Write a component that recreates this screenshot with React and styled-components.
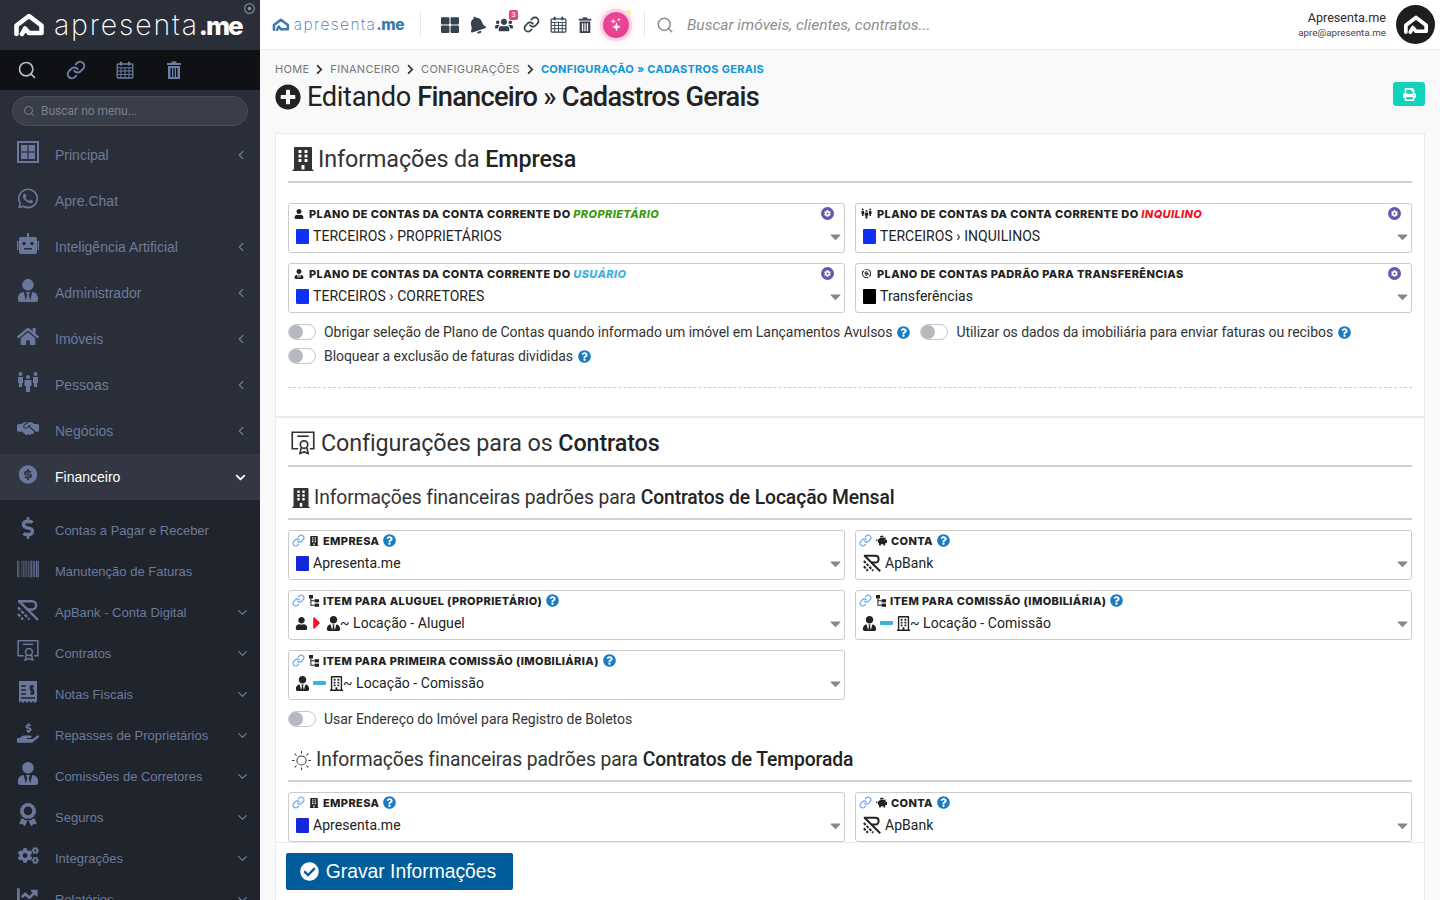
import React from "react";
import styled, { createGlobalStyle } from "styled-components";
import {
  FaWhatsapp, FaUserTie, FaHome, FaDollarSign, FaBarcode,
  FaHandHoldingUsd, FaAward, FaCogs, FaChartLine, FaThLarge,
  FaBell, FaUsers, FaPlusCircle, FaPrint, FaBuilding, FaRegBuilding, FaUser,
  FaQuestionCircle, FaCog, FaCheckCircle, FaCaretRight, FaCaretDown,
  FaPiggyBank, FaRegDotCircle, FaChevronRight,
} from "react-icons/fa";
import { FaHandshakeSimple } from "react-icons/fa6";
import { FiLink, FiSearch, FiChevronLeft, FiChevronDown } from "react-icons/fi";
import { PiSunLight } from "react-icons/pi";
import { RiMoneyDollarCircleFill, RiExchangeDollarLine } from "react-icons/ri";
import { BsStars } from "react-icons/bs";

const GlobalStyle = createGlobalStyle`
  html, body { margin: 0; height: 100%; overflow: hidden; }
  body { font-family: Roboto, "Liberation Sans", sans-serif; background: #f9f9f9; color: #222; }
  * { box-sizing: border-box; }
`;

// drawn icons
const LogoMark = ({ size = 32 }) => (
  <svg width={size} height={(size * 3) / 4} viewBox="0 0 32 24" fill="none" stroke="currentColor" strokeWidth="4.6" strokeLinejoin="round" strokeLinecap="round">
    <path d="M3.5 21 V12.5 L16 3 L28.5 12.5 V20 H16 L12 15.5 L9 21" />
  </svg>
);

const WindowIcon = ({ size = 22 }) => (
  <svg width={size} height={size} viewBox="0 0 22 22" fill="currentColor">
    <path fillRule="evenodd" d="M0 0H22V22H0ZM2 2V20H20V2Z" />
    <rect x="4" y="4" width="6.4" height="6.4" />
    <rect x="11.6" y="4" width="6.4" height="6.4" />
    <rect x="4" y="11.6" width="6.4" height="6.4" />
    <rect x="11.6" y="11.6" width="6.4" height="6.4" />
  </svg>
);

const CalendarIcon = ({ size = 18 }) => (
  <svg width={size} height={size} viewBox="0 0 18 18" fill="none" stroke="currentColor" strokeWidth="1.3">
    <rect x="1.2" y="3" width="15.6" height="14" rx="1" />
    <path d="M1.2 6.8H16.8M1.2 10H16.8M1.2 13.4H16.8M5 6.8V17M9 6.8V17M13 6.8V17" strokeWidth="1" />
    <path d="M5 .8V4.4M13 .8V4.4" strokeWidth="2" />
  </svg>
);

const TrashIcon = ({ size = 18 }) => (
  <svg width={size} height={size} viewBox="0 0 18 18" fill="currentColor">
    <rect x="2" y="2" width="14" height="2" />
    <rect x="6.5" y="0.4" width="5" height="2" />
    <path fillRule="evenodd" d="M3 5H15V18H3ZM5.5 7V16H7V7ZM8.3 7V16H9.7V7ZM11 7V16H12.5V7Z" />
  </svg>
);

const PeopleIcon = ({ size = 22 }) => (
  <svg width={size} height={size} viewBox="0 0 22 22" fill="currentColor">
    <circle cx="3.5" cy="3" r="2" />
    <circle cx="11" cy="6" r="2" />
    <circle cx="18.5" cy="3" r="2" />
    <path d="M1 6H6V12H5V16H2V12H1ZM16 6H21V12H20V16H17V12H16ZM7.5 9H14.5V15H13V21H9V15H7.5Z" />
  </svg>
);

const BankIcon = ({ size = 22 }) => (
  <svg width={size} height={size} viewBox="0 0 22 22" fill="none" stroke="currentColor" strokeWidth="2.4">
    <path d="M1 2.2H15C20.5 2.2 20.5 10.5 15 10.5H10.5" />
    <path d="M2 2.2L21 21" />
    <path d="M1 8.5L12.5 20.5M1 15L6 20.5" strokeDasharray="3.4 1.5" />
  </svg>
);

const RobotIcon = ({ size = 22 }) => (
  <svg width={size} height={size} viewBox="0 0 22 22">
    <path fill="currentColor" d="M10 0H12V4H10ZM4 4H18A2 2 0 0 1 20 6V19A2 2 0 0 1 18 21H4A2 2 0 0 1 2 19V6A2 2 0 0 1 4 4ZM0 8H1.4V17H0ZM20.6 8H22V17H20.6Z" />
    <circle cx="7" cy="10.5" r="1.8" fill="#2a2e39" />
    <circle cx="15" cy="10.5" r="1.8" fill="#2a2e39" />
    <rect x="7" y="15" width="8" height="1.6" fill="#2a2e39" />
  </svg>
);

const CertificateIcon = ({ size = 23 }) => (
  <svg width={size} height={size} viewBox="0 0 23 23" fill="none" stroke="currentColor" strokeWidth="1.6">
    <path d="M7 17H1.2V1.2H21.8V17H18" />
    <path d="M6 5H17" />
    <circle cx="12.5" cy="13" r="3.6" />
    <path d="M9.8 16L8.6 21.5L12.5 20L16.4 21.5L15.2 16" />
  </svg>
);

const ReceiptIcon = ({ size = 22 }) => (
  <svg width={size} height={size} viewBox="0 0 22 22">
    <path fill="currentColor" d="M2 0H20V20L18 22L16 20L14 22L12 20L10 22L8 20L6 22L4 20L2 22Z" />
    <path fill="none" stroke="#20242d" strokeWidth="1.4" d="M4 5H9M4 9H9M4 13H9M4 17H18M17 5.5H13.5V9H16.5V12.5H13M15 4V14" />
  </svg>
);

const TreeIcon = () => (
  <svg width="10" height="12" viewBox="0 0 10 12" fill="currentColor">
    <rect x="0" y="0" width="4" height="3.4" />
    <rect x="5.6" y="4.2" width="4.4" height="3.2" />
    <rect x="5.6" y="8.6" width="4.4" height="3.2" />
    <path d="M1.4 3H2.4V5.3H5.6V6.3H2.4V9.7H5.6V10.7H1.4Z" />
  </svg>
);

const mainMenu = [
  { label: "Principal", icon: <WindowIcon />, arrow: true },
  { label: "Apre.Chat", icon: <FaWhatsapp size={23} /> },
  { label: "Inteligência Artificial", icon: <RobotIcon />, arrow: true },
  { label: "Administrador", icon: <FaUserTie size={23} />, arrow: true },
  { label: "Imóveis", icon: <FaHome size={23} />, arrow: true },
  { label: "Pessoas", icon: <PeopleIcon />, arrow: true },
  { label: "Negócios", icon: <FaHandshakeSimple size={23} />, arrow: true },
];

const subMenu = [
  { label: "Contas a Pagar e Receber", icon: <FaDollarSign size={22} /> },
  { label: "Manutenção de Faturas", icon: <FaBarcode size={22} /> },
  { label: "ApBank - Conta Digital", icon: <BankIcon />, arrow: true },
  { label: "Contratos", icon: <CertificateIcon />, arrow: true },
  { label: "Notas Fiscais", icon: <ReceiptIcon />, arrow: true },
  { label: "Repasses de Proprietários", icon: <FaHandHoldingUsd size={22} />, arrow: true },
  { label: "Comissões de Corretores", icon: <FaUserTie size={23} />, arrow: true },
  { label: "Seguros", icon: <FaAward size={23} />, arrow: true },
  { label: "Integrações", icon: <FaCogs size={21} />, arrow: true },
  { label: "Relatórios", icon: <FaChartLine size={25} />, arrow: true },
];

const Shell = styled.div`
  display: flex;
  height: 100vh;
  overflow: hidden;
`;

const Sidebar = styled.aside`
  width: 260px;
  flex: none;
  display: flex;
  flex-direction: column;
  background: #2a2e39;
  color: #6c7b9b;
  overflow: hidden;
`;

const Brand = styled.div`
  height: 50px;
  flex: none;
  padding: 0 0 0 13px;
  display: flex;
  align-items: center;
  gap: 9px;
  color: #fff;
  position: relative;
`;

const BrandName = styled.span`
  font-family: Inter, "Liberation Sans", sans-serif;
  font-size: ${(p) => (p.$small ? "15.5px" : "28.5px")};
  font-weight: 200;
  letter-spacing: ${(p) => (p.$small ? "1.4px" : "1.8px")};
  line-height: 1;
  white-space: nowrap;
  strong {
    font-weight: 800;
    font-size: ${(p) => (p.$small ? "15.5px" : "26px")};
    letter-spacing: ${(p) => (p.$small ? "-0.5px" : "-2px")};
  }
`;

const BrandDot = styled.span`
  position: absolute;
  top: 3px;
  right: 5px;
  font-size: 11px;
  line-height: 1;
  color: #8a93a5;
`;

const ToolStrip = styled.div`
  height: 40px;
  flex: none;
  background: #0f1114;
  display: flex;
  align-items: center;
  padding-left: 17px;
  gap: 29px;
  color: #6c7ea6;
`;

const StripIcon = styled.span`
  width: 20px;
  display: flex;
  justify-content: center;
  color: ${(p) => p.$light || "inherit"};
`;

const MenuSearch = styled.div`
  height: 30px;
  flex: none;
  margin: 6px 12px 6px;
  border: 1px solid #484d59;
  border-radius: 15px;
  background: #3a3e49;
  display: flex;
  align-items: center;
  gap: 6px;
  padding-left: 10px;
  font-size: 12px;
  color: #7a8091;
`;

const MenuList = styled.nav`
  display: flex;
  flex-direction: column;
`;

const MenuRow = styled.div`
  height: ${(p) => (p.$sub ? "41px" : "46px")};
  flex: none;
  display: flex;
  align-items: center;
  padding: 0 ${(p) => (p.$sub ? "10px" : "12px")} 0 17px;
  font-family: "Liberation Sans", Arial, sans-serif;
  font-size: ${(p) => (p.$sub ? "13px" : "14px")};
  color: ${(p) => (p.$active ? "#fff" : "#6c7b9b")};
  background: ${(p) => (p.$active ? "#323743" : "transparent")};
`;

const MenuIcon = styled.span`
  width: 22px;
  height: 24px;
  flex: none;
  margin: -6px 16px 0 0;
  display: flex;
  align-items: center;
  justify-content: center;
  color: #69789a;
`;

const MenuLabel = styled.span`
  flex: 1;
  white-space: nowrap;
`;

const SubMenu = styled.div`
  flex: 1;
  background: #20242d;
  padding-top: 10px;
  display: flex;
  flex-direction: column;
`;

const Main = styled.div`
  flex: 1;
  min-width: 0;
  display: flex;
  flex-direction: column;
  height: 100vh;
`;

const Topbar = styled.header`
  height: 50px;
  flex: none;
  background: #fff;
  border-bottom: 1px solid #ececec;
  display: flex;
  align-items: center;
  padding: 0 5px 0 12px;
`;

const TopLogo = styled.div`
  display: flex;
  align-items: center;
  gap: 4px;
  width: 132px;
  color: #3f78ae;
`;

const Divider = styled.span`
  width: 1px;
  height: 25px;
  background: #e6e6e6;
  margin: ${(p) => p.$margin};
`;

const TopIcons = styled.div`
  display: flex;
  align-items: center;
  gap: 9px;
  color: #37424f;
`;

const TopIcon = styled.span`
  position: relative;
  width: 18px;
  height: 20px;
  display: flex;
  align-items: center;
  justify-content: center;
  transform: ${(p) => (p.$tilt ? "rotate(-18deg)" : "none")};
`;

const CountBadge = styled.span`
  position: absolute;
  top: -5px;
  right: -5px;
  width: 9px;
  height: 10px;
  border-radius: 2px;
  background: #e8447f;
  color: #fff;
  font-size: 8px;
  line-height: 10px;
  text-align: center;
`;

const MagicButton = styled.span`
  position: relative;
  width: 26px;
  height: 26px;
  margin: 0 1px 0 0;
  border-radius: 50%;
  background: radial-gradient(circle at 50% 40%, #ef4d9c, #e4358b);
  box-shadow: 0 0 0 3px #f9cfe3, 0 0 6px 4px #fbe3ee;
  display: flex;
  align-items: center;
  justify-content: center;
  color: #fff;
  font-size: 13px;
  &::after {
    content: "";
    position: absolute;
    top: -2px;
    right: -2px;
    width: 5px;
    height: 5px;
    border-radius: 50%;
    background: #ffe9a8;
  }
`;

const TopSearch = styled.div`
  flex: 1;
  display: flex;
  align-items: center;
  gap: 13px;
  padding-left: 11px;
  color: #8d8d8d;
  font-size: 15.5px;
  font-style: italic;
`;

const Profile = styled.div`
  display: flex;
  flex-direction: column;
  align-items: flex-end;
  margin-right: 10px;
`;

const ProfileName = styled.span`
  font-size: 12.6px;
  line-height: 16px;
  color: #2b2b2b;
`;

const ProfileMail = styled.span`
  font-size: 9.8px;
  line-height: 14px;
  color: #444;
`;

const Avatar = styled.span`
  width: 39px;
  height: 39px;
  border-radius: 50%;
  background: #1e1e1e;
  color: #fff;
  display: flex;
  align-items: center;
  justify-content: center;
`;

const Content = styled.main`
  flex: 1;
  min-height: 0;
  overflow: hidden;
  padding: 0 15px;
`;

const Breadcrumb = styled.div`
  height: 30px;
  padding-top: 8px;
  display: flex;
  align-items: center;
  gap: 5px;
  font-family: Inter, "Liberation Sans", sans-serif;
  font-size: 11px;
  color: #777;
  svg { color: #333; }
`;

const Crumb = styled.span`
  font-weight: ${(p) => (p.$current ? 700 : 400)};
  color: ${(p) => (p.$current ? "#0d94dc" : "#777")};
  letter-spacing: ${(p) => (p.$current ? "0.27px" : "0.3px")};
`;

const TitleRow = styled.div`
  height: 53px;
  display: flex;
  align-items: flex-start;
  justify-content: space-between;
`;

const PageTitle = styled.h1`
  margin: 0;
  display: flex;
  align-items: center;
  gap: 6px;
  font-size: 27.2px;
  line-height: 34px;
  font-weight: 400;
  letter-spacing: -0.35px;
  color: #222;
  strong { font-weight: 500; letter-spacing: -0.72px; }
`;

const PrintButton = styled.span`
  width: 32px;
  height: 24px;
  margin-top: 2px;
  border-radius: 3px;
  background: #11d3bc;
  color: #fff;
  display: flex;
  align-items: center;
  justify-content: center;
`;

const Panel = styled.section`
  background: #fff;
  border: 1px solid #ebebeb;
  padding: 0 12px;
  padding-bottom: ${(p) => p.$bottom || "0"};
`;

const PanelTitle = styled.h2`
  margin: 0 0 ${(p) => p.$after || "0"};
  height: ${(p) => (p.$sub ? "auto" : "49px")};
  padding: ${(p) => p.$pad || "3px 0 0 3px"};
  border-bottom: 2px solid #d0d0d0;
  display: flex;
  align-items: center;
  gap: ${(p) => p.$gap || "3px"};
  font-size: ${(p) => (p.$sub ? "19.3px" : "23.3px")};
  font-weight: 400;
  letter-spacing: -0.1px;
  line-height: 28px;
  color: #333;
  white-space: nowrap;
  strong { font-weight: 500; color: #222; }
`;

const FieldGrid = styled.div`
  display: grid;
  grid-template-columns: 1fr 1fr;
  gap: 10px;
`;

const FieldBox = styled.div`
  height: 50px;
  border: 1px solid #ccc;
  border-radius: 3px;
  background: #fff;
  display: flex;
  flex-direction: column;
  padding: 2px 0 0 ${(p) => (p.$linked ? "3px" : "5px")};
`;

const FieldLabel = styled.div`
  height: 15px;
  display: flex;
  align-items: center;
  gap: ${(p) => (p.$linked ? "4px" : "5px")};
  font-family: Inter, "Liberation Sans", sans-serif;
  font-size: 11px;
  font-weight: 800;
  letter-spacing: 0.38px;
  color: #222;
  white-space: nowrap;
`;

const Accent = styled.em`
  color: ${(p) => p.$color};
  font-weight: 800;
`;

const GearDot = styled.span`
  margin-left: auto;
  margin-right: 10px;
  width: 13px;
  height: 13px;
  border-radius: 50%;
  background: #6a55ad;
  color: #fff;
  font-size: 7px;
  display: flex;
  align-items: center;
  justify-content: center;
`;

const FieldValue = styled.div`
  flex: 1;
  display: flex;
  align-items: center;
  gap: 4px;
  padding: 0 0 1px ${(p) => (p.$linked ? "4px" : "2px")};
  font-size: 14px;
  letter-spacing: 0.05px;
  color: #222;
  white-space: nowrap;
`;

const Swatch = styled.span`
  width: 13px;
  height: 15px;
  border-radius: 1px;
  background: ${(p) => p.$color};
`;

const DashMark = styled.span`
  width: 13px;
  height: 4px;
  background: #3fb0de;
  border-radius: 1px;
`;

const ValueIcons = styled.span`
  display: flex;
  align-items: center;
  gap: 3px;
  margin: 0 -5px 0 -1px;
  color: #222;
`;

const RedCaret = styled.span`
  display: flex;
  margin: 0 -4px;
  color: #f0141e;
`;

const Caret = styled.span`
  margin-left: auto;
  display: flex;
  color: #888;
  padding-top: 1px;
`;

const LinkMark = styled.span`
  color: #5aa2ee;
  display: flex;
`;

const HelpMark = styled.span`
  display: inline-flex;
  color: #1c7cc2;
  font-size: 13px;
`;

const ToggleGroup = styled.div`
  display: flex;
  flex-direction: column;
  gap: 8px;
  margin-top: 11px;
`;

const ToggleLine = styled.div`
  display: flex;
  align-items: center;
  gap: 10px;
`;

const ToggleItem = styled.label`
  display: flex;
  align-items: center;
  height: 16px;
  gap: 5px;
  font-size: 14px;
  letter-spacing: -0.05px;
  color: #333;
  white-space: nowrap;
`;

const ToggleTrack = styled.span`
  width: 28px;
  height: 16px;
  margin-right: 3px;
  border: 1px solid #c4c8cc;
  border-radius: 8px;
  display: flex;
  align-items: center;
  &::before {
    content: "";
    width: 14px;
    height: 14px;
    border-radius: 50%;
    background: #b4b9c0;
  }
`;

const DashedRule = styled.hr`
  margin: 23px 0 0;
  border: 0;
  border-top: 1px dashed #ccc;
`;

const FooterBar = styled.footer`
  height: 58px;
  flex: none;
  margin: 0 15px;
  padding: 10px 10px;
  background: #fff;
  border: 1px solid #ebebeb;
  border-bottom: 0;
`;

const SaveButton = styled.button`
  width: 227px;
  height: 37px;
  border: 0;
  border-radius: 2px;
  background: #005d99;
  color: #fff;
  font-family: "Liberation Sans", Arial, sans-serif;
  font-size: 19.3px;
  display: flex;
  align-items: center;
  justify-content: center;
  gap: 7px;
  svg { margin-left: -3px; }
`;

const Help = () => <HelpMark><FaQuestionCircle /></HelpMark>;

const Field = ({ icon, label, linked, gear, children }) => (
  <FieldBox $linked={linked}>
    <FieldLabel $linked={linked}>
      {linked && <LinkMark><FiLink size={13} strokeWidth={2} /></LinkMark>}
      {icon}
      <span>{label}</span>
      {linked && <Help />}
      {gear && <GearDot><FaCog /></GearDot>}
    </FieldLabel>
    <FieldValue $linked={linked}>
      {children}
      <Caret><FaCaretDown size={17} /></Caret>
    </FieldValue>
  </FieldBox>
);

const Toggle = ({ children, help }) => (
  <ToggleItem>
    <ToggleTrack />
    <span>{children}</span>
    {help && <Help />}
  </ToggleItem>
);

const App = () => {
  return (
    <Shell>
      <GlobalStyle />
      <Sidebar>
        <Brand>
          <LogoMark size={32} />
          <BrandName>apresenta<strong>.me</strong></BrandName>
          <BrandDot><FaRegDotCircle /></BrandDot>
        </Brand>
        <ToolStrip>
          <StripIcon $light="#b6bcc8"><FiSearch size={22} /></StripIcon>
          <StripIcon><FiLink size={20} strokeWidth={2.4} /></StripIcon>
          <StripIcon><CalendarIcon /></StripIcon>
          <StripIcon><TrashIcon /></StripIcon>
        </ToolStrip>
        <MenuSearch>
          <FiSearch size={12} />
          Buscar no menu...
        </MenuSearch>
        <MenuList>
          {mainMenu.map((item) => (
            <MenuRow key={item.label}>
              <MenuIcon>{item.icon}</MenuIcon>
              <MenuLabel>{item.label}</MenuLabel>
              {item.arrow && <FiChevronLeft size={14} />}
            </MenuRow>
          ))}
          <MenuRow $active>
            <MenuIcon><RiMoneyDollarCircleFill size={25} /></MenuIcon>
            <MenuLabel>Financeiro</MenuLabel>
            <FiChevronDown size={15} strokeWidth={3} />
          </MenuRow>
        </MenuList>
        <SubMenu>
          {subMenu.map((item) => (
            <MenuRow $sub key={item.label}>
              <MenuIcon>{item.icon}</MenuIcon>
              <MenuLabel>{item.label}</MenuLabel>
              {item.arrow && <FiChevronDown size={15} />}
            </MenuRow>
          ))}
        </SubMenu>
      </Sidebar>

      <Main>
        <Topbar>
          <TopLogo>
            <LogoMark size={18} />
            <BrandName $small>apresenta<strong>.me</strong></BrandName>
          </TopLogo>
          <Divider $margin="0 20px 0 16px" />
          <TopIcons>
            <TopIcon><FaThLarge size={18} /></TopIcon>
            <TopIcon $tilt><FaBell size={18} /></TopIcon>
            <TopIcon><FaUsers size={18} /><CountBadge>3</CountBadge></TopIcon>
            <TopIcon><FiLink size={17} strokeWidth={2.4} /></TopIcon>
            <TopIcon><CalendarIcon size={17} /></TopIcon>
            <TopIcon><TrashIcon size={16} /></TopIcon>
            <MagicButton><BsStars /></MagicButton>
          </TopIcons>
          <Divider $margin="0 0 0 14px" />
          <TopSearch>
            <FiSearch size={18} />
            Buscar imóveis, clientes, contratos...
          </TopSearch>
          <Profile>
            <ProfileName>Apresenta.me</ProfileName>
            <ProfileMail>apre@apresenta.me</ProfileMail>
          </Profile>
          <Avatar><LogoMark size={26} /></Avatar>
        </Topbar>

        <Content>
          <Breadcrumb>
            <Crumb>HOME</Crumb><FaChevronRight size={11} />
            <Crumb>FINANCEIRO</Crumb><FaChevronRight size={11} />
            <Crumb>CONFIGURAÇÕES</Crumb><FaChevronRight size={11} />
            <Crumb $current>CONFIGURAÇÃO » CADASTROS GERAIS</Crumb>
          </Breadcrumb>
          <TitleRow>
            <PageTitle>
              <FaPlusCircle size={26} />
              <span>Editando <strong>Financeiro » Cadastros Gerais</strong></span>
            </PageTitle>
            <PrintButton><FaPrint size={13} /></PrintButton>
          </TitleRow>

          <Panel $bottom="28px">
            <PanelTitle $after="20px">
              <FaBuilding size={24} />
              <span>Informações da <strong>Empresa</strong></span>
            </PanelTitle>
            <FieldGrid>
              <Field gear icon={<FaUser size={10} />} label={<>PLANO DE CONTAS DA CONTA CORRENTE DO <Accent $color="#3d9a12">PROPRIETÁRIO</Accent></>}>
                <Swatch $color="#1130f5" />TERCEIROS › PROPRIETÁRIOS
              </Field>
              <Field gear icon={<PeopleIcon size={11} />} label={<>PLANO DE CONTAS DA CONTA CORRENTE DO <Accent $color="#f0141e">INQUILINO</Accent></>}>
                <Swatch $color="#1130f5" />TERCEIROS › INQUILINOS
              </Field>
              <Field gear icon={<FaUserTie size={10} />} label={<>PLANO DE CONTAS DA CONTA CORRENTE DO <Accent $color="#3fb0de">USUÁRIO</Accent></>}>
                <Swatch $color="#1130f5" />TERCEIROS › CORRETORES
              </Field>
              <Field gear icon={<RiExchangeDollarLine size={11} />} label="PLANO DE CONTAS PADRÃO PARA TRANSFERÊNCIAS">
                <Swatch $color="#000" />Transferências
              </Field>
            </FieldGrid>
            <ToggleGroup>
              <ToggleLine>
                <Toggle help>Obrigar seleção de Plano de Contas quando informado um imóvel em Lançamentos Avulsos</Toggle>
                <Toggle help>Utilizar os dados da imobiliária para enviar faturas ou recibos</Toggle>
              </ToggleLine>
              <Toggle help>Bloquear a exclusão de faturas divididas</Toggle>
            </ToggleGroup>
            <DashedRule />
          </Panel>

          <Panel>
            <PanelTitle $gap="6px">
              <CertificateIcon size={24} />
              <span>Configurações para os <strong>Contratos</strong></span>
            </PanelTitle>
            <PanelTitle $sub $after="10px" $pad="17px 0 6px 3px">
              <FaBuilding size={20} />
              <span>Informações financeiras padrões para <strong>Contratos de Locação Mensal</strong></span>
            </PanelTitle>
            <FieldGrid>
              <Field linked icon={<FaBuilding size={10} />} label="EMPRESA">
                <Swatch $color="#1428d8" />Apresenta.me
              </Field>
              <Field linked icon={<FaPiggyBank size={11} />} label="CONTA">
                <BankIcon size={18} />ApBank
              </Field>
              <Field linked icon={<TreeIcon />} label="ITEM PARA ALUGUEL (PROPRIETÁRIO)">
                <ValueIcons><FaUser size={13} /><RedCaret><FaCaretRight size={20} /></RedCaret><FaUserTie size={15} /></ValueIcons>~ Locação - Aluguel
              </Field>
              <Field linked icon={<TreeIcon />} label="ITEM PARA COMISSÃO (IMOBILIÁRIA)">
                <ValueIcons><FaUserTie size={15} /><DashMark /><FaRegBuilding size={15} /></ValueIcons>~ Locação - Comissão
              </Field>
              <Field linked icon={<TreeIcon />} label="ITEM PARA PRIMEIRA COMISSÃO (IMOBILIÁRIA)">
                <ValueIcons><FaUserTie size={15} /><DashMark /><FaRegBuilding size={15} /></ValueIcons>~ Locação - Comissão
              </Field>
            </FieldGrid>
            <ToggleGroup>
              <Toggle>Usar Endereço do Imóvel para Registro de Boletos</Toggle>
            </ToggleGroup>
            <PanelTitle $sub $after="10px" $pad="19px 0 6px 3px" $gap="4px">
              <PiSunLight size={21} />
              <span>Informações financeiras padrões para <strong>Contratos de Temporada</strong></span>
            </PanelTitle>
            <FieldGrid>
              <Field linked icon={<FaBuilding size={10} />} label="EMPRESA">
                <Swatch $color="#1428d8" />Apresenta.me
              </Field>
              <Field linked icon={<FaPiggyBank size={11} />} label="CONTA">
                <BankIcon size={18} />ApBank
              </Field>
            </FieldGrid>
          </Panel>
        </Content>

        <FooterBar>
          <SaveButton>
            <FaCheckCircle size={19} />
            Gravar Informações
          </SaveButton>
        </FooterBar>
      </Main>
    </Shell>
  );
};

export default App;
